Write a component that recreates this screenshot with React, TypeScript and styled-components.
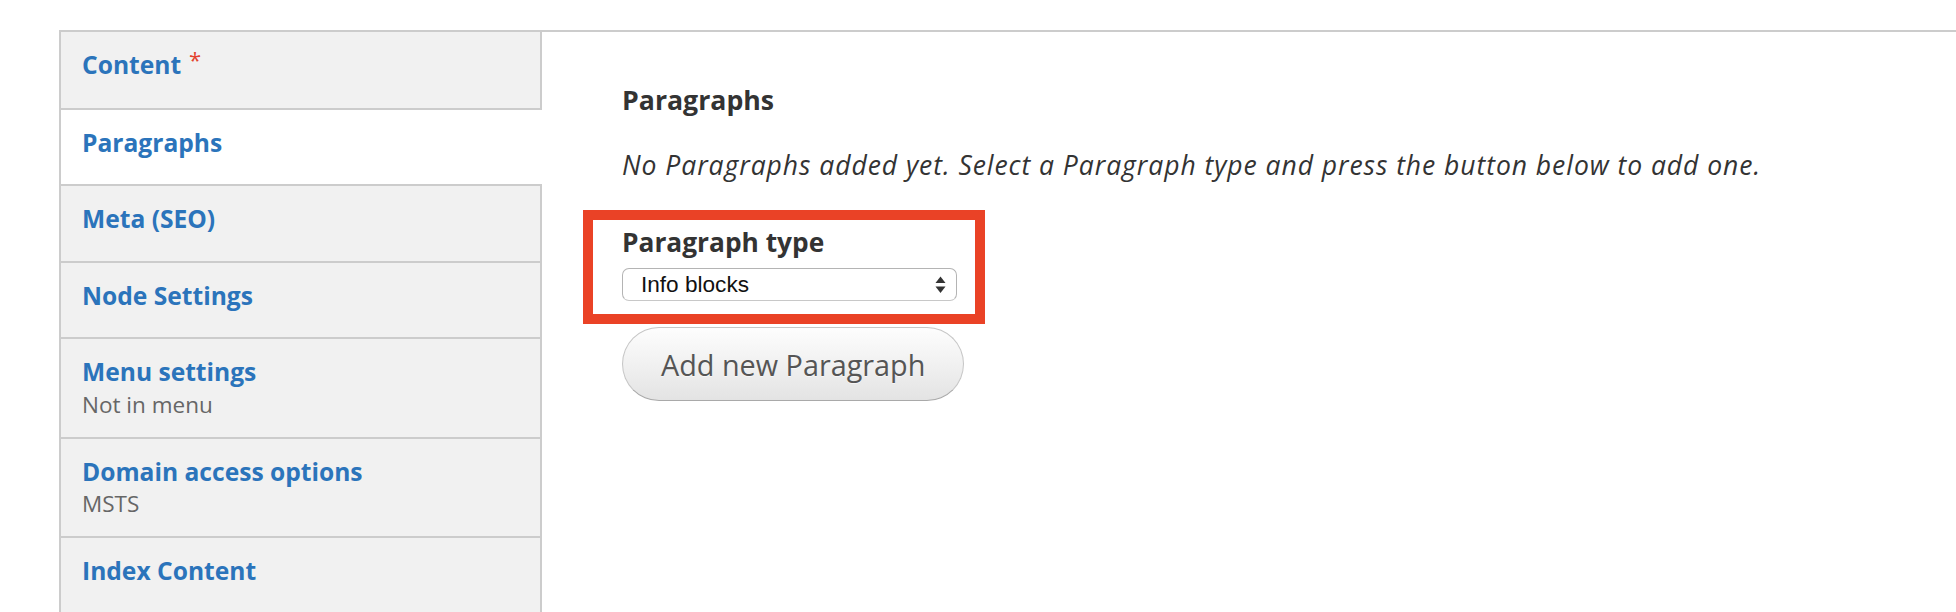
import React from "react";
import styled, { createGlobalStyle } from "styled-components";

const GlobalStyle = createGlobalStyle`
  html, body {
    margin: 0;
    padding: 0;
    background: #ffffff;
    overflow: hidden;
  }
  body {
    font-family: "Open Sans", "DejaVu Sans", sans-serif;
    color: #333333;
  }
  * { box-sizing: border-box; }
`;

const Page = styled.div`
  width: 1956px;
  height: 612px;
  overflow: hidden;
  padding: 30px 0 0 59px;
`;

const Tabs = styled.div`
  display: flex;
  align-items: stretch;
  border-top: 2px solid #cccccc;
  border-left: 2px solid #cccccc;
  min-height: 700px;
`;

const Menu = styled.ul`
  list-style: none;
  margin: 0;
  padding: 0;
  width: 481px;
  flex: 0 0 481px;
  background: #f1f1f1;
  border-right: 2px solid #cccccc;
  margin-right: -2px;
  position: relative;
  z-index: 0;
`;

const MenuItem = styled.li<{ $active?: boolean }>`
  display: block;
  padding: 12px 21px 21px;
  background: ${(p) => (p.$active ? "#ffffff" : "#f1f1f1")};
  border-bottom: 2px solid #cccccc;
  margin-right: ${(p) => (p.$active ? "-2px" : "0")};
  position: relative;
  z-index: ${(p) => (p.$active ? 1 : 0)};
`;

const ItemTitle = styled.a`
  display: block;
  font-family: "Open Sans", "DejaVu Sans", sans-serif;
  font-weight: 700;
  font-size: 24.6px;
  line-height: 41.5px;
  color: #2b74bb;
  text-decoration: none;
  white-space: nowrap;
`;

const Required = styled.span`
  color: #e3412e;
  font-weight: 400;
  font-size: 22px;
  margin-left: 8px;
  position: relative;
  top: -6px;
`;

const ItemSummary = styled.span`
  display: block;
  font-size: 22.5px;
  line-height: 23px;
  color: #666666;
  white-space: nowrap;
`;

const Pane = styled.div`
  flex: 1 1 auto;
  background: #ffffff;
  padding: 51px 0 0 82px;
`;

const Heading = styled.h4`
  margin: 0;
  font-size: 26.7px;
  line-height: 34px;
  font-weight: 700;
  color: #333333;
`;

const Description = styled.p`
  margin: 31px 0 0;
  font-size: 26.5px;
  line-height: 34px;
  letter-spacing: 0.95px;
  font-style: italic;
  color: #333333;
  white-space: nowrap;
`;

const FormItem = styled.div`
  position: relative;
  display: inline-block;
  margin-top: 43px;
`;

const Highlight = styled.div`
  position: absolute;
  left: -39px;
  top: -15px;
  right: -28px;
  bottom: -23px;
  border: 10px solid #ea4226;
  pointer-events: none;
`;

const Label = styled.label`
  display: block;
  font-size: 26.3px;
  line-height: 34px;
  font-weight: 700;
  color: #333333;
`;

const SelectBox = styled.div`
  margin-top: 9px;
  width: 335px;
  height: 33px;
  display: flex;
  align-items: center;
  justify-content: space-between;
  padding: 0 10px 0 18px;
  border: 1px solid #b4b4b4;
  border-bottom-color: #c8c8c8;
  border-radius: 7px;
  background: #ffffff;
  font-family: "Liberation Sans", Arial, sans-serif;
  font-size: 22.6px;
  color: #111111;
`;

const Arrows = styled.svg`
  flex: 0 0 auto;
`;

const ButtonRow = styled.div`
  display: block;
`;

const Button = styled.button`
  margin-top: 26px;
  height: 74px;
  padding: 0 38px;
  border: 1px solid #c6c6c6;
  border-bottom-color: #a9a9a9;
  border-radius: 40px;
  background: linear-gradient(to bottom, #fdfdfd 0%, #f1f1f1 50%, #e3e3e3 100%);
  font-family: "Open Sans", "DejaVu Sans", sans-serif;
  font-size: 28.8px;
  color: #555555;
  text-shadow: 0 1px rgba(255, 255, 255, 0.6);
  cursor: pointer;
`;

type Tab = { title: string; summary?: string; required?: boolean; active?: boolean };

const tabs: Tab[] = [
  { title: "Content", required: true },
  { title: "Paragraphs", active: true },
  { title: "Meta (SEO)" },
  { title: "Node Settings" },
  { title: "Menu settings", summary: "Not in menu" },
  { title: "Domain access options", summary: "MSTS" },
  { title: "Index Content" },
];

export default function App() {
  return (
    <>
      <GlobalStyle />
      <Page>
        <Tabs>
          <Menu>
            {tabs.map((t) => (
              <MenuItem key={t.title} $active={t.active}>
                <ItemTitle href="#">
                  {t.title}
                  {t.required && <Required>*</Required>}
                </ItemTitle>
                {t.summary && <ItemSummary>{t.summary}</ItemSummary>}
              </MenuItem>
            ))}
          </Menu>
          <Pane>
            <Heading>Paragraphs</Heading>
            <Description>
              No Paragraphs added yet. Select a Paragraph type and press the button below to add one.
            </Description>
            <FormItem>
              <Label>Paragraph type</Label>
              <SelectBox>
                <span>Info blocks</span>
                <Arrows width="11" height="18" viewBox="0 0 11 18">
                  <path d="M5.5 0.5 L10.5 7 L0.5 7 Z" fill="#333" />
                  <path d="M0.5 10.5 L10.5 10.5 L5.5 17 Z" fill="#333" />
                </Arrows>
              </SelectBox>
              <Highlight />
            </FormItem>
            <ButtonRow>
              <Button type="button">Add new Paragraph</Button>
            </ButtonRow>
          </Pane>
        </Tabs>
      </Page>
    </>
  );
}
